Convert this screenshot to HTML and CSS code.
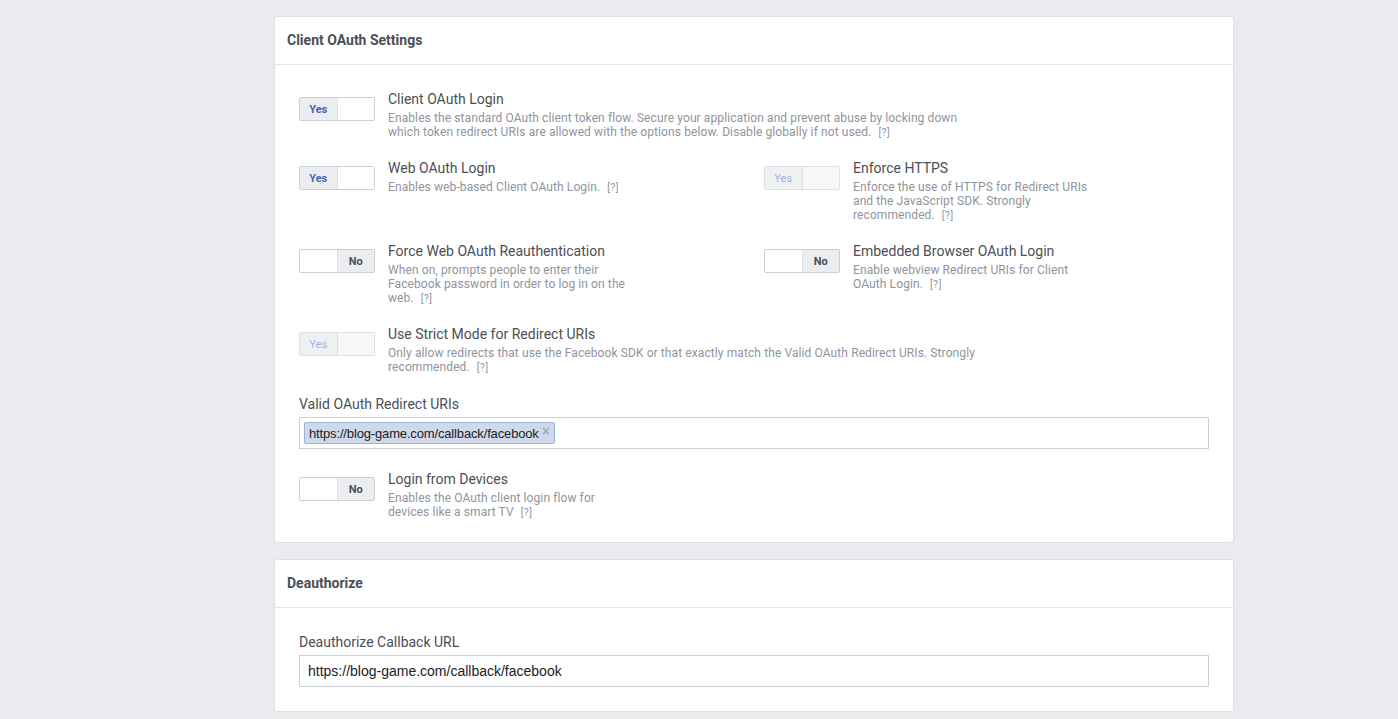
FILE: index.html
```html
<!DOCTYPE html>
<html>
<head>
<meta charset="utf-8">
<link rel="stylesheet" href="styles.css">
</head>
<body>
<main class="page">
  <section class="card">
    <header class="card-head">Client OAuth Settings</header>
    <div class="card-body">
      <div class="row">
        <div class="setting">
          <div class="toggle on"><span class="seg seg-yes">Yes</span><span class="seg seg-blank"></span></div>
          <div class="info">
            <div class="title">Client OAuth Login</div>
            <div class="desc">Enables the standard OAuth client token flow. Secure your application and prevent abuse by locking down<br>which token redirect URIs are allowed with the options below. Disable globally if not used. <span class="help">[?]</span></div>
          </div>
        </div>
      </div>
      <div class="row two">
        <div class="setting">
          <div class="toggle on"><span class="seg seg-yes">Yes</span><span class="seg seg-blank"></span></div>
          <div class="info">
            <div class="title">Web OAuth Login</div>
            <div class="desc">Enables web-based Client OAuth Login. <span class="help">[?]</span></div>
          </div>
        </div>
        <div class="setting">
          <div class="toggle on disabled"><span class="seg seg-yes">Yes</span><span class="seg seg-blank"></span></div>
          <div class="info">
            <div class="title">Enforce HTTPS</div>
            <div class="desc">Enforce the use of HTTPS for Redirect URIs<br>and the JavaScript SDK. Strongly<br>recommended. <span class="help">[?]</span></div>
          </div>
        </div>
      </div>
      <div class="row two">
        <div class="setting">
          <div class="toggle off"><span class="seg seg-blank"></span><span class="seg seg-no">No</span></div>
          <div class="info">
            <div class="title">Force Web OAuth Reauthentication</div>
            <div class="desc">When on, prompts people to enter their<br>Facebook password in order to log in on the<br>web. <span class="help">[?]</span></div>
          </div>
        </div>
        <div class="setting">
          <div class="toggle off"><span class="seg seg-blank"></span><span class="seg seg-no">No</span></div>
          <div class="info">
            <div class="title">Embedded Browser OAuth Login</div>
            <div class="desc">Enable webview Redirect URIs for Client<br>OAuth Login. <span class="help">[?]</span></div>
          </div>
        </div>
      </div>
      <div class="row">
        <div class="setting">
          <div class="toggle on disabled"><span class="seg seg-yes">Yes</span><span class="seg seg-blank"></span></div>
          <div class="info">
            <div class="title">Use Strict Mode for Redirect URIs</div>
            <div class="desc">Only allow redirects that use the Facebook SDK or that exactly match the Valid OAuth Redirect URIs. Strongly<br>recommended. <span class="help">[?]</span></div>
          </div>
        </div>
      </div>
      <div class="field">
        <label class="field-label">Valid OAuth Redirect URIs</label>
        <div class="input tokens"><span class="token">https://blog-game.com/callback/facebook<span class="token-x">×</span></span></div>
      </div>
      <div class="row last">
        <div class="setting">
          <div class="toggle off"><span class="seg seg-blank"></span><span class="seg seg-no">No</span></div>
          <div class="info">
            <div class="title">Login from Devices</div>
            <div class="desc">Enables the OAuth client login flow for<br>devices like a smart TV <span class="help">[?]</span></div>
          </div>
        </div>
      </div>
    </div>
  </section>

  <section class="card">
    <header class="card-head">Deauthorize</header>
    <div class="card-body body-b">
      <div class="field">
        <label class="field-label">Deauthorize Callback URL</label>
        <div class="input text">https://blog-game.com/callback/facebook</div>
      </div>
    </div>
  </section>
</main>
</body>
</html>
```

FILE: styles.css
```css
html, body {
  margin: 0;
  padding: 0;
  background: #e9ebee;
  font-family: Roboto, "Liberation Sans", Arial, sans-serif;
  color: #4b4f56;
}

.page {
  padding: 16px 0 0 274px;
  width: 960px;
  display: flex;
  flex-direction: column;
  gap: 16px;
}

.card {
  background: #fff;
  border: 1px solid #dddfe2;
  border-radius: 3px;
}

.card-head {
  height: 45px;
  display: flex;
  align-items: center;
  padding: 0 12px 2px;
  border-bottom: 1px solid #e5e5e5;
  font-size: 14px;
  font-weight: bold;
  color: #4b4f56;
}

.card-body {
  padding: 25px 24px 22px;
  display: flex;
  flex-direction: column;
}

.body-b {
  padding: 25px 24px 24px;
}

.row {
  display: flex;
  margin-bottom: 20px;
}

.row:first-child {
  margin-bottom: 19px;
}

.row.two {
  margin-bottom: 19px;
}

.row.two .setting {
  width: 465px;
  flex: none;
}

.row.last {
  margin-bottom: 0;
}

.setting {
  display: flex;
  gap: 13px;
}

.toggle {
  flex: none;
  margin-top: 7px;
  width: 74px;
  height: 22px;
  border: 1px solid #ccd0d5;
  border-radius: 2px;
  display: flex;
  overflow: hidden;
}

.seg {
  flex: 1;
  display: flex;
  align-items: center;
  justify-content: center;
  font-size: 11px;
  font-weight: bold;
}

.seg-yes {
  background: #ebedf0;
  color: #4267b2;
  border-right: 1px solid #dddfe2;
}

.seg-no {
  background: #ebedf0;
  color: #4b4f56;
  border-left: 1px solid #dddfe2;
}

.seg-blank {
  background: #fff;
}

.toggle.disabled {
  border-color: #dfe1e5;
}

.toggle.disabled .seg-yes {
  background: #eef0f3;
  color: #9fb5dc;
  font-weight: normal;
}

.toggle.disabled .seg-blank {
  background: #f6f7f9;
}

.title {
  font-size: 14px;
  line-height: 18px;
  color: #4b4f56;
  margin-bottom: 3px;
}

.desc {
  font-size: 12px;
  line-height: 14px;
  color: #90949c;
  letter-spacing: 0.1px;
}

.help {
  font-size: 10px;
  margin-left: 4px;
  letter-spacing: 0.6px;
}

.field {
  display: flex;
  flex-direction: column;
  margin-bottom: 21px;
}

.body-b .field {
  margin-bottom: 0;
}

.field-label {
  font-size: 14px;
  line-height: 18px;
  color: #4b4f56;
  margin-bottom: 4px;
}

.input {
  height: 30px;
  border: 1px solid #ccd0d5;
  background: #fff;
  display: flex;
  align-items: center;
  font-family: "Liberation Sans", Arial, sans-serif;
  font-size: 13px;
  color: #1d2129;
}

.input.tokens {
  padding-left: 4px;
}

.input.text {
  padding-left: 8px;
  font-size: 14px;
}

.token {
  height: 20px;
  display: flex;
  align-items: center;
  padding: 0 4px;
  background: #cfd9ea;
  border: 1px solid #9cb4d8;
  border-radius: 2px;
  font-size: 13px;
  letter-spacing: -0.15px;
  color: #1d2129;
}

.token-x {
  margin-left: 3px;
  color: #a2aec2;
  font-size: 14px;
  font-weight: bold;
  position: relative;
  top: -2px;
}
```
